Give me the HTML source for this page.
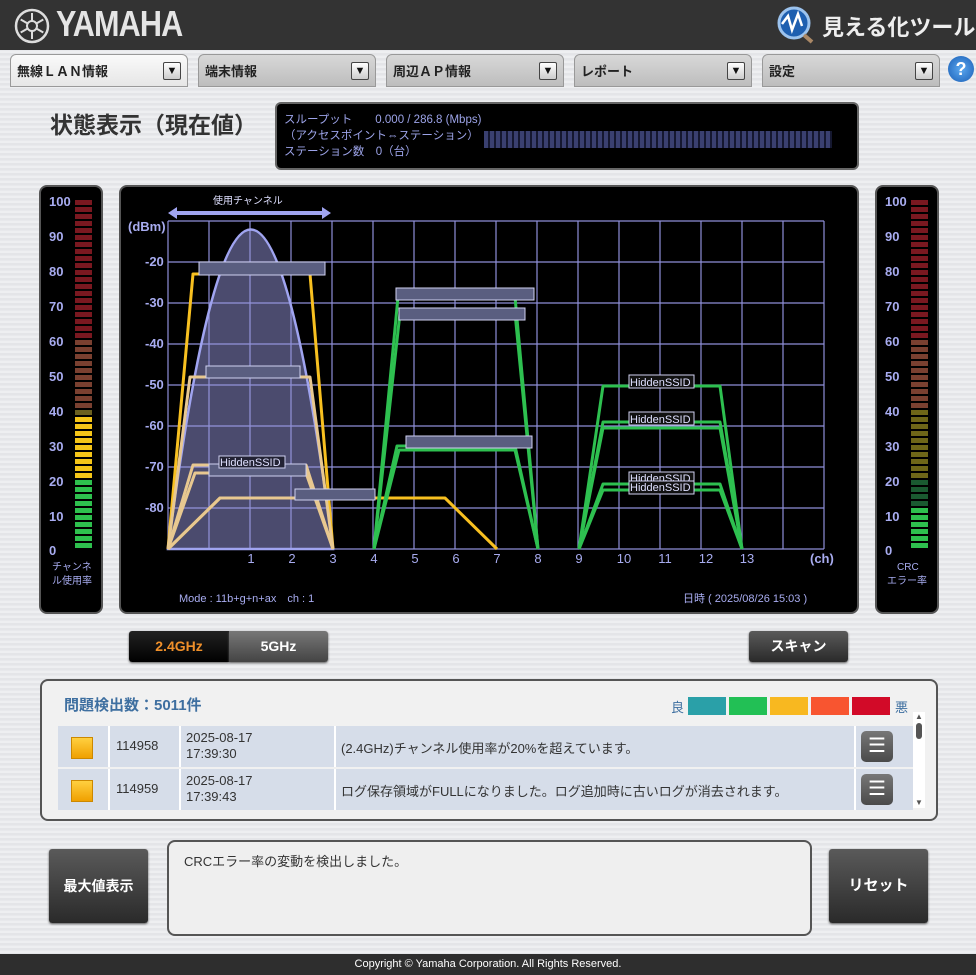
<!DOCTYPE html>
<html><head><meta charset="utf-8">
<style>
*{margin:0;padding:0;box-sizing:border-box}
body{width:976px;height:975px;position:relative;overflow:hidden;font-family:"Liberation Sans","Noto Sans CJK JP",sans-serif;background:repeating-linear-gradient(0deg,#e4e5e8 0 2px,#eeeff1 2px 4px,#e8e9ec 4px 5px)}
.abs{position:absolute}
.hdr{left:0;top:0;width:976px;height:50px;background:#333}
.tab{top:54px;height:33px;width:178px;border-radius:6px 6px 0 0;background:linear-gradient(#d8d8d8,#bdbdbd);border:1px solid #999;font-size:13px;font-weight:bold;color:#222;padding:6px 0 0 6px}
.tab.act{background:linear-gradient(#fafafa,#e6e6e6)}
.tab .dd{position:absolute;right:6px;top:7px;width:18px;height:18px;background:linear-gradient(#fff,#ccc);border:1px solid #444;border-radius:2px;font-size:11px;text-align:center;line-height:16px;color:#111}
.btn{color:#fff;font-weight:bold;font-size:14px;text-align:center;border-radius:3px;background:linear-gradient(#5a5a5a,#2a2a2a);box-shadow:0 1px 2px #555}
.row{left:58px;height:41px;width:855px;background:#d6dde9}
.cell{position:absolute;top:0;height:41px;border-left:2px solid #fff;font-size:13px;color:#333}
.mb{margin:5px 0 0 5px;width:32px;height:31px;border-radius:5px;background:linear-gradient(#777,#4a4a4a);color:#fff;font-size:20px;text-align:center;line-height:30px}
</style></head><body>
<div class="abs hdr"></div>
<svg class="abs" style="left:14px;top:8px" width="36" height="36" viewBox="0 0 36 36"><circle cx="18" cy="18" r="16" fill="none" stroke="#ddd" stroke-width="2.5"/><g stroke="#ddd" stroke-width="2"><line x1="18" y1="5" x2="18" y2="31"/><line x1="6.7" y1="11.5" x2="29.3" y2="24.5"/><line x1="6.7" y1="24.5" x2="29.3" y2="11.5"/></g><circle cx="18" cy="18" r="5" fill="#333" stroke="#ddd" stroke-width="2"/></svg>
<div class="abs" style="left:56px;top:3px;color:#e5e5e5;font-size:36px;font-weight:bold;letter-spacing:-1px;transform:scaleX(0.85);transform-origin:left">YAMAHA</div>
<svg class="abs" style="left:772px;top:4px" width="46" height="40"><circle cx="22" cy="19" r="15" fill="#1e5fb0" stroke="#9cc3ee" stroke-width="3"/><path d="M10 20 L16 12 L20 26 L26 10 L30 22" stroke="#fff" stroke-width="2.5" fill="none"/><line x1="32" y1="31" x2="40" y2="38" stroke="#a86" stroke-width="4"/></svg>
<div class="abs" style="left:822px;top:10px;color:#eee;font-size:22px;font-weight:bold">見える化ツール</div>

<div class="abs tab act" style="left:10px">無線ＬＡＮ情報<span class="dd">▼</span></div>
<div class="abs tab" style="left:198px">端末情報<span class="dd">▼</span></div>
<div class="abs tab" style="left:386px">周辺ＡＰ情報<span class="dd">▼</span></div>
<div class="abs tab" style="left:574px">レポート<span class="dd">▼</span></div>
<div class="abs tab" style="left:762px">設定<span class="dd">▼</span></div>
<div class="abs" style="left:948px;top:56px;width:26px;height:26px;border-radius:50%;background:radial-gradient(#5ba8f0,#1a5eb5);color:#fff;font-weight:bold;font-size:18px;text-align:center;line-height:26px">?</div>

<div class="abs" style="left:50px;top:106px;font-size:23px;font-weight:bold;color:#333">状態表示（現在値）</div>
<div class="abs" style="left:275px;top:102px;width:584px;height:68px;background:#000;border:2px solid #666;border-radius:6px"></div>
<div class="abs" style="left:284px;top:112px;font-size:11.5px;color:#9ca3e8;line-height:16px">スループット　　0.000 / 286.8 (Mbps)<br>（アクセスポイント⇔ステーション）<br>ステーション数　0（台）</div>
<div class="abs" style="left:484px;top:131px;width:348px;height:17px;background:repeating-linear-gradient(90deg,#3a4070 0 4px,#151830 4px 6px)"></div>

<svg class="abs" style="left:0;top:0" width="976" height="975" id="g">
<rect x="40" y="186" width="62" height="427" rx="7" fill="#000" stroke="#555" stroke-width="2"/>
<rect x="876" y="186" width="62" height="427" rx="7" fill="#000" stroke="#555" stroke-width="2"/>
<rect x="120" y="186" width="738" height="427" rx="7" fill="#000" stroke="#555" stroke-width="2"/>
<g font-size="13" font-weight="bold" fill="#a8acf0" font-family="Liberation Sans">
<text x="49" y="206">100</text><text x="49" y="241">90</text><text x="49" y="276">80</text><text x="49" y="311">70</text><text x="49" y="346">60</text><text x="49" y="381">50</text><text x="49" y="416">40</text><text x="49" y="451">30</text><text x="49" y="486">20</text><text x="49" y="521">10</text><text x="49" y="555">0</text>
<text x="885" y="206">100</text><text x="885" y="241">90</text><text x="885" y="276">80</text><text x="885" y="311">70</text><text x="885" y="346">60</text><text x="885" y="381">50</text><text x="885" y="416">40</text><text x="885" y="451">30</text><text x="885" y="486">20</text><text x="885" y="521">10</text><text x="885" y="555">0</text>
</g>
<g font-size="10" fill="#a8acf0" font-family="Liberation Sans,Noto Sans CJK JP"><text x="52" y="570">チャンネ</text><text x="52" y="584">ル使用率</text><text x="897" y="570">CRC</text><text x="887" y="584">エラー率</text></g>
<g id="bars"></g>
<g id="grid" stroke="#8e8ed8" stroke-width="1.2"></g>
<path d="M168 549 Q251 -90 333 549 Z" fill="rgba(150,150,220,0.5)" stroke="#a0a4f0" stroke-width="2.5"/>
<g fill="none" stroke-width="3" stroke-linejoin="round">
<path d="M168 549 L193 274 L310 274 L333 549" stroke="#f8c020"/>
<path d="M168 549 L190 377 L310 377 L333 549" stroke="#e8c890"/>
<path d="M168 549 L193 465 L306 465 L333 549" stroke="#e8c890"/>
<path d="M168 549 L195 473 L306 473 L333 549" stroke="#e8c890"/>
<path d="M168 549 L220 498 L445 498 L497 549" stroke="#f8c020"/>
<path d="M168 549 L220 498 L300 498" stroke="#e8c890"/>
<path d="M374 549 L398 297 L515 297 L538 549" stroke="#2ec050"/>
<path d="M374 549 L400 313 L515 313 L538 549" stroke="#2ec050"/>
<path d="M374 549 L397 446 L515 446 L538 549" stroke="#2ec050"/>
<path d="M374 549 L399 450 L515 450 L538 549" stroke="#2ec050"/>
<path d="M579 549 L603 386 L720 386 L742 549" stroke="#2ec050"/>
<path d="M579 549 L603 422 L720 422 L742 549" stroke="#2ec050"/>
<path d="M579 549 L603 428 L720 428 L742 549" stroke="#2ec050"/>
<path d="M579 549 L603 484 L720 484 L742 549" stroke="#2ec050"/>
<path d="M579 549 L603 490 L720 490 L742 549" stroke="#2ec050"/>
</g>
<g fill="#5a5e80" stroke="#cfd0f0" stroke-width="1">
<rect x="199" y="262" width="126" height="13"/><rect x="206" y="366" width="94" height="12"/><rect x="209" y="464" width="97" height="12"/><rect x="295" y="489" width="80" height="11"/>
<rect x="396" y="288" width="138" height="12"/><rect x="399" y="308" width="126" height="12"/><rect x="406" y="436" width="126" height="12"/>
</g>
<g font-size="11" fill="#dfe0ff" font-family="Liberation Sans"><rect x="219" y="456" width="66" height="12" fill="#223" stroke="#cfd0f0"/><text x="220" y="466">HiddenSSID</text>
<rect x="629" y="375" width="65" height="13" fill="#111" stroke="#cfd0f0"/><text x="630" y="386">HiddenSSID</text>
<rect x="629" y="412" width="65" height="13" fill="#111" stroke="#cfd0f0"/><text x="630" y="423">HiddenSSID</text>
<rect x="629" y="472" width="65" height="13" fill="#111" stroke="#cfd0f0"/><text x="630" y="482">HiddenSSID</text>
<rect x="629" y="481" width="65" height="13" fill="#111" stroke="#cfd0f0"/><text x="630" y="491">HiddenSSID</text></g>
<line x1="172" y1="213" x2="327" y2="213" stroke="#a0a4f0" stroke-width="4"/><path d="M168 213 L177 207 L177 219Z M331 213 L322 207 L322 219Z" fill="#a0a4f0"/>
<text x="213" y="204" font-size="10" fill="#dfe0ff" font-family="Liberation Sans,Noto Sans CJK JP">使用チャンネル</text>
<g font-size="13" font-weight="bold" fill="#a8acf0" font-family="Liberation Sans"><text x="128" y="231">(dBm)</text>
<text x="145" y="266">-20</text><text x="145" y="307">-30</text><text x="145" y="348">-40</text><text x="145" y="389">-50</text><text x="145" y="430">-60</text><text x="145" y="471">-70</text><text x="145" y="512">-80</text>
<text x="810" y="563">(ch)</text></g>
<g font-size="13" fill="#a8acf0" font-family="Liberation Sans" text-anchor="middle">
<text x="251" y="563">1</text><text x="292" y="563">2</text><text x="333" y="563">3</text><text x="374" y="563">4</text><text x="415" y="563">5</text><text x="456" y="563">6</text><text x="497" y="563">7</text><text x="538" y="563">8</text><text x="579" y="563">9</text><text x="624" y="563">10</text><text x="665" y="563">11</text><text x="706" y="563">12</text><text x="747" y="563">13</text></g>
<text x="179" y="602" font-size="11" fill="#a8acf0" font-family="Liberation Sans">Mode : 11b+g+n+ax　ch : 1</text>
<text x="683" y="602" font-size="11" fill="#a8acf0" font-family="Liberation Sans,Noto Sans CJK JP">日時 ( 2025/08/26 15:03 )</text>
</svg>
<script>
var b=document.getElementById('bars'),s='';
for(var i=0;i<50;i++){var y=543-i*7;
var c=i<10?'#2ec04e':i<19?'#f5c518':i<20?'#6b6020':i<30?'#7a4030':'#7a1820';
var d=i<6?'#2ec04e':i<10?'#1a5a30':i<20?'#6e6618':i<30?'#7a4030':'#7a1820';
s+='<rect x="75" y="'+y+'" width="17" height="5" fill="'+c+'"/><rect x="911" y="'+y+'" width="17" height="5" fill="'+d+'"/>';}
b.innerHTML=s;
var g=document.getElementById('grid'),t='';
for(var k=0;k<17;k++){var x=168+k*41;t+='<line x1="'+x+'" y1="221" x2="'+x+'" y2="549"/>';}
for(var k=0;k<9;k++){var y=221+k*41;t+='<line x1="168" y1="'+y+'" x2="824" y2="'+y+'"/>';}
g.innerHTML=t;
</script>

<div class="abs btn" style="left:129px;top:631px;width:100px;height:31px;line-height:31px;background:linear-gradient(#222,#000);color:#f0902a;border-radius:3px 0 0 3px">2.4GHz</div>
<div class="abs btn" style="left:229px;top:631px;width:99px;height:31px;line-height:31px;background:linear-gradient(#777,#444);border-radius:0 3px 3px 0">5GHz</div>
<div class="abs btn" style="left:749px;top:631px;width:99px;height:31px;line-height:31px">スキャン</div>

<div class="abs" style="left:40px;top:679px;width:898px;height:142px;background:#f1f1f1;border:2px solid #555;border-radius:8px"></div>
<div class="abs" style="left:64px;top:694px;font-size:15px;font-weight:bold;color:#3e6fa0">問題検出数：5011件</div>
<div class="abs" style="left:671px;top:697px;font-size:13px;color:#3e6fa0">良</div>
<div class="abs" style="left:688px;top:697px;width:38px;height:18px;background:#2aa0a8"></div>
<div class="abs" style="left:729px;top:697px;width:38px;height:18px;background:#22c055"></div>
<div class="abs" style="left:770px;top:697px;width:38px;height:18px;background:#f8b820"></div>
<div class="abs" style="left:811px;top:697px;width:38px;height:18px;background:#f85530"></div>
<div class="abs" style="left:852px;top:697px;width:38px;height:18px;background:#d20a28"></div>
<div class="abs" style="left:895px;top:697px;font-size:13px;color:#3e6fa0">悪</div>
<div class="abs" style="left:913px;top:712px;width:12px;height:96px;background:#fff;font-size:8px;color:#555;text-align:center;line-height:10px">▲<div style="margin:1px 3px;width:6px;height:16px;background:#555;border-radius:3px"></div><div style="position:absolute;bottom:0;width:12px">▼</div></div>

<div class="abs row" style="top:726px">
<div class="cell" style="left:0;width:50px;border:0"><div style="margin:11px 13px;width:22px;height:22px;background:linear-gradient(#ffd040,#f0a000);border:1px solid #c80"></div></div>
<div class="cell" style="left:50px;width:71px;padding:12px 6px">114958</div>
<div class="cell" style="left:121px;width:155px;padding:4px 5px;line-height:16px">2025-08-17<br>17:39:30</div>
<div class="cell" style="left:276px;width:520px;padding:12px 5px">(2.4GHz)チャンネル使用率が20%を超えています。</div>
<div class="cell" style="left:796px;width:59px"><div class="mb">☰</div></div></div>
<div class="abs row" style="top:769px">
<div class="cell" style="left:0;width:50px;border:0"><div style="margin:11px 13px;width:22px;height:22px;background:linear-gradient(#ffd040,#f0a000);border:1px solid #c80"></div></div>
<div class="cell" style="left:50px;width:71px;padding:12px 6px">114959</div>
<div class="cell" style="left:121px;width:155px;padding:4px 5px;line-height:16px">2025-08-17<br>17:39:43</div>
<div class="cell" style="left:276px;width:520px;padding:12px 5px">ログ保存領域がFULLになりました。ログ追加時に古いログが消去されます。</div>
<div class="cell" style="left:796px;width:59px"><div class="mb">☰</div></div></div>

<div class="abs btn" style="left:49px;top:849px;width:99px;height:74px;line-height:74px">最大値表示</div>
<div class="abs" style="left:167px;top:840px;width:645px;height:96px;background:#efefef;border:2px solid #555;border-radius:8px;padding:9px 15px;font-size:13px;color:#333">CRCエラー率の変動を検出しました。</div>
<div class="abs btn" style="left:829px;top:849px;width:99px;height:74px;line-height:74px;font-size:15px">リセット</div>
<div class="abs" style="left:0;top:954px;width:976px;height:21px;background:#2e2e2e;color:#fff;font-size:11px;text-align:center;line-height:21px">Copyright © Yamaha Corporation. All Rights Reserved.</div>
</body></html>
